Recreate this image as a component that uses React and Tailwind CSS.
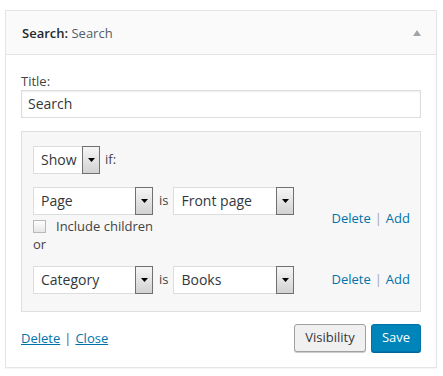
import React from "react"

function Select({ value, className }) {
  return (
    <div className={"flex h-[28px] border border-[#dddddd] bg-white " + className}>
      <div className="flex-1 pl-[7px] text-[14px] leading-[26px] text-[#32373c]">{value}</div>
      <div className="-my-px -mr-px flex w-[18px] items-center justify-center border border-[#707070] bg-gradient-to-b from-[#f6f6f6] to-[#d2d2d2]">
        <svg width="7" height="4" viewBox="0 0 7 4">
          <polygon points="0,0 7,0 3.5,4" fill="#000" />
        </svg>
      </div>
    </div>
  )
}

function RuleLinks({ className }) {
  return (
    <div className={"text-[13px] leading-[18px] " + className}>
      <span className="text-[#0073aa]">Delete</span>
      <span className="mx-[4px] text-[#a0a5aa]">|</span>
      <span className="text-[#0073aa]">Add</span>
    </div>
  )
}

export default function App() {
  return (
    <div className="min-h-screen bg-white pl-[5px] pt-[10px] font-['Open_Sans',sans-serif] text-[#444444]">
      <div className="w-[432px] border border-[#e5e5e5] bg-white shadow-[0_1px_1px_rgba(0,0,0,0.04)]">
        {/* Widget header */}
        <div className="flex h-[44px] items-center justify-between border-b border-[#e5e5e5] bg-[#fafafa] pl-[16px] pr-[15px]">
          <h3 className="text-[13px] leading-[18px] font-semibold text-[#23282d]">
            Search: <span className="font-normal text-[#555d66]">Search</span>
          </h3>
          <svg width="8" height="6" viewBox="0 0 8 6">
            <polygon points="4,0 8,6 0,6" fill="#a0a5aa" />
          </svg>
        </div>

        {/* Widget body */}
        <div className="px-[15px] pb-[15px] pt-[17px]">
          <label className="block text-[13px] leading-[18px]">Title:</label>
          <div className="h-[28px] w-full border border-[#dddddd] bg-white px-[6px] text-[14px] leading-[26px] text-[#32373c] shadow-[inset_0_1px_2px_rgba(0,0,0,0.07)]">
            Search
          </div>

          {/* Visibility rules */}
          <div className="mt-[13px] border border-[#dfdfdf] bg-[#f7f7f7] pb-[17px] pl-[11px] pr-[10px] pt-[14px]">
            <div className="flex h-[28px] items-center">
              <Select value="Show" className="w-[67px]" />
              <span className="ml-[5px] text-[13px]">if:</span>
            </div>

            <div className="mt-[13px] flex justify-between">
              <div>
                <div className="flex items-center">
                  <Select value="Page" className="w-[120px]" />
                  <span className="ml-[6px] mr-[5px] text-[13px]">is</span>
                  <Select value="Front page" className="w-[121px]" />
                </div>
                <div className="mt-[2px] flex h-[18px] items-center">
                  <div className="h-[13px] w-[13px] border border-[#b4b9be] bg-gradient-to-b from-[#ffffff] to-[#e6e6e6]" />
                  <span className="ml-[10px] text-[13px] leading-[18px]">Include children</span>
                </div>
                <div className="text-[13px] leading-[18px]">or</div>
              </div>
              <RuleLinks className="mt-[22px]" />
            </div>

            <div className="mt-[13px] flex justify-between">
              <div className="flex items-center">
                <Select value="Category" className="w-[120px]" />
                <span className="ml-[6px] mr-[5px] text-[13px]">is</span>
                <Select value="Books" className="w-[121px]" />
              </div>
              <RuleLinks className="mt-[4px]" />
            </div>
          </div>

          {/* Footer actions */}
          <div className="mt-[12px] flex items-center justify-between">
            <div className="text-[13px] leading-[18px]">
              <span className="text-[#0073aa] underline">Delete</span>
              <span className="mx-[4px] text-[#555555]">|</span>
              <span className="text-[#0073aa] underline">Close</span>
            </div>
            <div className="flex gap-[5px]">
              <button className="h-[28px] w-[72px] rounded-[3px] border border-[#a0a0a0] bg-[#f0f0f0] text-[13px] text-[#32373c] shadow-[0_1px_0_#cccccc]">
                Visibility
              </button>
              <button className="h-[28px] w-[50px] rounded-[3px] border border-[#0073aa] bg-[#0085ba] text-[13px] text-white shadow-[0_1px_0_#006799]">
                Save
              </button>
            </div>
          </div>
        </div>
      </div>
    </div>
  )
}
